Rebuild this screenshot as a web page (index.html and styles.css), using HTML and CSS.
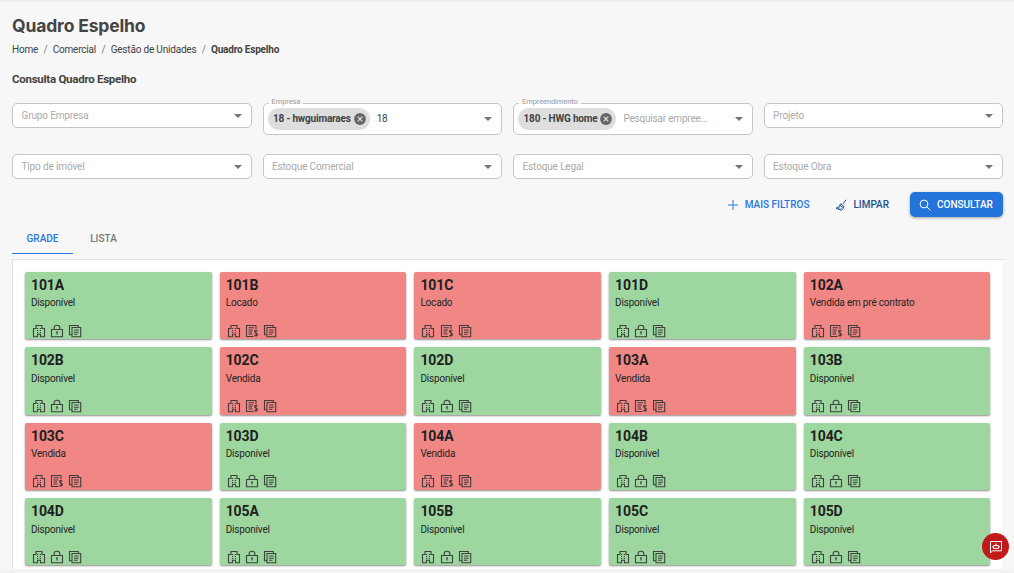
FILE: index.html
```html
<!DOCTYPE html>
<html lang="pt-BR">
<head>
<meta charset="utf-8">
<title>Quadro Espelho</title>
<link rel="stylesheet" href="styles.css">
</head>
<body>
<svg class="sprite" aria-hidden="true">
  <symbol id="building" viewBox="0 0 14 14"><path d="M1.5 12.8V4.5H4V1.5H10V4.5H12.5V12.8H8.5V10.3H5.5V12.8ZM5 4.5H6.2M7.8 4.5H9M5 6.5H6.2M7.8 6.5H9M5 8.5H6.2M7.8 8.5H9"/></symbol>
  <symbol id="lock" viewBox="0 0 14 14"><path d="M1.5 5.5H12.5V12.8H1.5ZM4.2 5.5V3.5Q4.2 1.3 7 1.3T9.8 3.5V5.5M6 8H8M7 7.6V10.6"/></symbol>
  <symbol id="contract" viewBox="0 0 14 14"><path d="M11 5V1.5H1.5V12.5H8.5M3.5 3.8H9M3.5 6H8M3.5 8H7M3.5 10H7.5M12.5 6.8Q9.5 5.8 9.5 7.6C9.5 9.3 12.5 8.7 12.5 10.6Q12.2 12.4 9.2 11.5M11 5.8V12.8"/></symbol>
  <symbol id="copy" viewBox="0 0 14 14"><path d="M4 3.5H12.7V12.7H4ZM10.3 3.5V1.5H1.5V10.7H4M6 6H10.8M6 8.2H10.8M6 10.3H9.5"/></symbol>
</svg>
<main class="page">
  <h1 class="title">Quadro Espelho</h1>
  <nav class="crumbs"><span>Home</span><i>/</i><span>Comercial</span><i>/</i><span>Gestão de Unidades</span><i>/</i><b>Quadro Espelho</b></nav>
  <h2 class="subtitle">Consulta Quadro Espelho</h2>

  <section class="filters">
    <div class="field"><span class="hint">Grupo Empresa</span><span class="arrow"></span></div>
    <div class="field tall"><span class="label">Empresa</span><span class="chip">18 - hwguimaraes<svg viewBox="0 0 12 12"><circle cx="6" cy="6" r="5.9"/><path d="M3.7 3.7l4.6 4.6M8.3 3.7L3.7 8.3"/></svg></span><span class="value">18</span><span class="arrow"></span></div>
    <div class="field tall"><span class="label">Empreendimento</span><span class="chip">180 - HWG home<svg viewBox="0 0 12 12"><circle cx="6" cy="6" r="5.9"/><path d="M3.7 3.7l4.6 4.6M8.3 3.7L3.7 8.3"/></svg></span><span class="hint search">Pesquisar empree…</span><span class="arrow"></span></div>
    <div class="field"><span class="hint">Projeto</span><span class="arrow"></span></div>
    <div class="field"><span class="hint">Tipo de imóvel</span><span class="arrow"></span></div>
    <div class="field"><span class="hint">Estoque Comercial</span><span class="arrow"></span></div>
    <div class="field"><span class="hint">Estoque Legal</span><span class="arrow"></span></div>
    <div class="field"><span class="hint">Estoque Obra</span><span class="arrow"></span></div>
  </section>

  <div class="actions">
    <button class="btn more"><svg viewBox="0 0 12 12"><path d="M6 1V11M1 6H11"/></svg>MAIS FILTROS</button>
    <button class="btn clear"><svg viewBox="0 0 12 12"><path d="M11 .8L8 5M5.6 4.8L8.8 7.2Q8.8 9.6 6.6 11.3L1 9.2Q4.6 8.6 5.6 4.8M4.9 6.4L8.4 8.8M3.2 10L4.8 8.6M5 10.6L6.4 9.2"/></svg>LIMPAR</button>
    <button class="btn primary"><svg viewBox="0 0 12 12"><circle cx="5" cy="5" r="3.9"/><path d="M7.9 7.9L11.3 11.3"/></svg>CONSULTAR</button>
  </div>

  <div class="tabs"><span class="tab active">GRADE</span><span class="tab">LISTA</span></div>

  <section class="panel">
    <article class="card free"><h3>101A</h3><p>Disponível</p><div class="icons"><svg><use href="#building"/></svg><svg><use href="#lock"/></svg><svg><use href="#copy"/></svg></div></article>
    <article class="card taken"><h3>101B</h3><p>Locado</p><div class="icons"><svg><use href="#building"/></svg><svg><use href="#contract"/></svg><svg><use href="#copy"/></svg></div></article>
    <article class="card taken"><h3>101C</h3><p>Locado</p><div class="icons"><svg><use href="#building"/></svg><svg><use href="#contract"/></svg><svg><use href="#copy"/></svg></div></article>
    <article class="card free"><h3>101D</h3><p>Disponível</p><div class="icons"><svg><use href="#building"/></svg><svg><use href="#lock"/></svg><svg><use href="#copy"/></svg></div></article>
    <article class="card taken"><h3>102A</h3><p>Vendida em pré contrato</p><div class="icons"><svg><use href="#building"/></svg><svg><use href="#contract"/></svg><svg><use href="#copy"/></svg></div></article>
    <article class="card free"><h3>102B</h3><p>Disponível</p><div class="icons"><svg><use href="#building"/></svg><svg><use href="#lock"/></svg><svg><use href="#copy"/></svg></div></article>
    <article class="card taken"><h3>102C</h3><p>Vendida</p><div class="icons"><svg><use href="#building"/></svg><svg><use href="#contract"/></svg><svg><use href="#copy"/></svg></div></article>
    <article class="card free"><h3>102D</h3><p>Disponível</p><div class="icons"><svg><use href="#building"/></svg><svg><use href="#lock"/></svg><svg><use href="#copy"/></svg></div></article>
    <article class="card taken"><h3>103A</h3><p>Vendida</p><div class="icons"><svg><use href="#building"/></svg><svg><use href="#contract"/></svg><svg><use href="#copy"/></svg></div></article>
    <article class="card free"><h3>103B</h3><p>Disponível</p><div class="icons"><svg><use href="#building"/></svg><svg><use href="#lock"/></svg><svg><use href="#copy"/></svg></div></article>
    <article class="card taken"><h3>103C</h3><p>Vendida</p><div class="icons"><svg><use href="#building"/></svg><svg><use href="#contract"/></svg><svg><use href="#copy"/></svg></div></article>
    <article class="card free"><h3>103D</h3><p>Disponível</p><div class="icons"><svg><use href="#building"/></svg><svg><use href="#lock"/></svg><svg><use href="#copy"/></svg></div></article>
    <article class="card taken"><h3>104A</h3><p>Vendida</p><div class="icons"><svg><use href="#building"/></svg><svg><use href="#contract"/></svg><svg><use href="#copy"/></svg></div></article>
    <article class="card free"><h3>104B</h3><p>Disponível</p><div class="icons"><svg><use href="#building"/></svg><svg><use href="#lock"/></svg><svg><use href="#copy"/></svg></div></article>
    <article class="card free"><h3>104C</h3><p>Disponível</p><div class="icons"><svg><use href="#building"/></svg><svg><use href="#lock"/></svg><svg><use href="#copy"/></svg></div></article>
    <article class="card free"><h3>104D</h3><p>Disponível</p><div class="icons"><svg><use href="#building"/></svg><svg><use href="#lock"/></svg><svg><use href="#copy"/></svg></div></article>
    <article class="card free"><h3>105A</h3><p>Disponível</p><div class="icons"><svg><use href="#building"/></svg><svg><use href="#lock"/></svg><svg><use href="#copy"/></svg></div></article>
    <article class="card free"><h3>105B</h3><p>Disponível</p><div class="icons"><svg><use href="#building"/></svg><svg><use href="#lock"/></svg><svg><use href="#copy"/></svg></div></article>
    <article class="card free"><h3>105C</h3><p>Disponível</p><div class="icons"><svg><use href="#building"/></svg><svg><use href="#lock"/></svg><svg><use href="#copy"/></svg></div></article>
    <article class="card free"><h3>105D</h3><p>Disponível</p><div class="icons"><svg><use href="#building"/></svg><svg><use href="#lock"/></svg><svg><use href="#copy"/></svg></div></article>
  </section>
</main>
<button class="fab" aria-label="Ajuda"><svg viewBox="0 0 14 14"><path d="M1.5 13V1.5H12.5V10.8H3.5ZM4.6 5.5H9.4V8.4H4.6ZM7 5.5V3.5M3.7 6.2V7.6M10.3 6.2V7.6"/></svg></button>
</body>
</html>
```
FILE: styles.css
```css
* { box-sizing: border-box; }
body { margin: 0; height: 573px; overflow: hidden; background: #f7f7f7; color: #424242; font: 10px/14px Roboto, sans-serif; letter-spacing: -.19px; }
h1, h2, h3, p { margin: 0; }
.sprite { display: none; }
.page { height: 573px; padding: 14px 10.5px 0 12px; border-top: 2px solid #f0f0f0; border-bottom: 4px solid #f2f2f2; overflow: hidden; }
.title { font: 700 17.5px/20px Inter, sans-serif; color: #444; letter-spacing: -.15px; }
.crumbs { display: flex; gap: 5.3px; margin-top: 7px; height: 14px; }
.crumbs i { font-style: normal; color: #777; }
.subtitle { margin-top: 14px; font-size: 11.5px; line-height: 16px; font-weight: 700; letter-spacing: -.26px; }
.filters { display: grid; grid-template-columns: repeat(4, 1fr); grid-template-rows: 32px 25px; column-gap: 11px; row-gap: 19px; margin: 16px .4px 0 0; align-items: start; }
.field { position: relative; display: flex; align-items: center; height: 25px; padding: 0 9px 0 8.5px; border: 1px solid #c6c6c6; border-radius: 5px; background: #fff; }
.tall { height: 32px; padding-left: 4px; }
.hint { color: #a9a9a9; letter-spacing: -.14px; }
.label { position: absolute; top: -7px; left: 5px; padding: 0 3px; font-size: 7.5px; line-height: 9px; letter-spacing: -.1px; color: #a0a0a0; background: linear-gradient(#f7f7f7 7px, #fff 7px); }
.chip { display: flex; align-items: center; gap: 3px; height: 22px; padding: 0 4px 0 5.5px; border-radius: 11px; background: #dedede; font-weight: 700; }
.chip svg { width: 12px; height: 12px; fill: #666; stroke: none; }
.chip path { stroke: #e4e4e4; stroke-width: 1.2; }
.value, .search { margin-left: 7px; }
.search { letter-spacing: -.2px; }
.arrow { margin-left: auto; border: 4px solid transparent; border-top-color: #757575; border-bottom: 0; }
.actions { display: flex; justify-content: flex-end; margin: 13px .5px 0 0; height: 25px; }
.btn { display: flex; align-items: center; border: 0; padding: 0; background: none; font: 500 10px/14px Roboto, sans-serif; letter-spacing: 0; white-space: nowrap; }
.btn svg { width: 12px; height: 12px; margin-right: 6px; fill: none; stroke: currentColor; stroke-width: 1; }
.more { color: #2a76dc; margin-right: 26px; }
.clear { color: #1f4f94; margin-right: 21px; }
.primary { width: 93px; padding-left: 9px; border-radius: 5px; background: #2274da; color: #fff; box-shadow: 0 1px 3px rgba(0,0,0,.35); }
.tabs { display: flex; height: 31px; margin-top: 6px; margin-bottom: 5.4px; }
.tab { width: 61px; padding-top: 9px; text-align: center; font-size: 10px; font-weight: 500; letter-spacing: 0; color: #777; border-bottom: 1.5px solid transparent; }
.active { color: #2878dc; border-bottom-color: #2a78d8; }
.panel { display: grid; grid-template-columns: repeat(5, 1fr); grid-auto-rows: 67.4px; gap: 8px; padding: 11.5px 12px 0; border: 1px solid #e3e3e3; border-right-color: #f2f2f2; background: #fff; height: 340px; }
.card { display: flex; flex-direction: column; padding: 4.2px 6px 1.6px; border-radius: 2px; box-shadow: 0 1px 2px rgba(0,0,0,.45); color: #242424; }
.free { background: #9dd79f; }
.taken { background: #f08784; }
.card h3 { font-size: 14px; line-height: 18px; font-weight: 700; letter-spacing: -.1px; color: #202020; }
.card p { margin-top: 2.4px; line-height: 14px; }
.icons { display: flex; gap: 4.2px; margin-top: auto; padding-left: 1px; }
.icons svg { width: 14px; height: 14px; fill: none; stroke: #333; stroke-width: 1.1; opacity: .9; }
.fab { position: absolute; left: 982px; top: 533px; width: 27px; height: 27px; display: grid; place-items: center; padding: 0; border: 0; border-radius: 50%; background: #c2191b; }
.fab svg { width: 14px; height: 14px; fill: none; stroke: #fff; stroke-width: 1; }
```
